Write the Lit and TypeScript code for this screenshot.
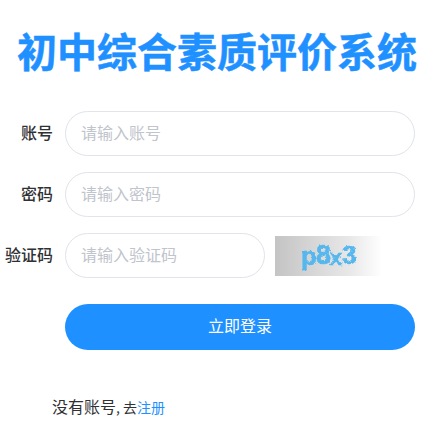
import { LitElement, html, css } from "lit";
import { customElement } from "lit/decorators.js";

@customElement("app-root")
export class AppRoot extends LitElement {
  static styles = css`
    :host { display: block; width: 445px; height: 431px; overflow: hidden; background: #fff; font-family: "Noto Sans CJK SC", "Liberation Sans", sans-serif; font-size: 16px; color: #303133; }
    h1 { margin: 0; padding: 20px 11px 0 0; text-align: center; color: #1e90ff; font-size: 40px; line-height: 60px; font-weight: 700; -webkit-text-stroke: 0.5px #1e90ff; }
    form { display: flex; flex-direction: column; gap: 16px; margin-top: 31px; padding-right: 30px; }
    .row { display: flex; align-items: center; }
    .submit { margin-top: 10px; }
    label { width: 53px; text-align: right; flex: none; margin-right: 12px; padding-bottom: 4px; white-space: nowrap; color: #303133; font-weight: 500; }
    .field { flex: 1; height: 45px; box-sizing: border-box; border: 1px solid #e0e3ea; border-radius: 23px; padding: 0 15px 4px; color: #c0c4cc; display: flex; align-items: center; }
    .short { flex: none; width: 200px; }
    .captcha { margin-left: 10px; flex: none; display: block; }
    .btn { margin-left: 65px; flex: 1; height: 46px; border: 0; padding: 0 0 4px; border-radius: 23px; background: #1e90ff; color: #fff; font: inherit; }
    .foot { margin: 45px 0 0 52px; font-size: 14px; line-height: 22px; color: #303133; white-space: nowrap; }
    .lead { font-size: 16px; }
    .foot a { color: #1e90ff; }
  `;
  render() {
    return html`
      <h1>初中综合素质评价系统</h1>
      <form>
        <div class="row"><label>账号</label><div class="field">请输入账号</div></div>
        <div class="row"><label>密码</label><div class="field">请输入密码</div></div>
        <div class="row"><label>验证码</label><div class="field short">请输入验证码</div>
          <svg class="captcha" width="107" height="40" viewBox="0 0 107 40">
            <defs>
              <linearGradient id="g"><stop offset="0" stop-color="#c4c4c4"/><stop offset="0.7" stop-color="#e8e8e8"/><stop offset="1" stop-color="#ffffff"/></linearGradient>
              <filter id="rough" x="-10%" y="-10%" width="120%" height="120%">
                <feTurbulence type="fractalNoise" baseFrequency="0.3" numOctaves="2" seed="4"/>
                <feDisplacementMap in="SourceGraphic" scale="3" xChannelSelector="R" yChannelSelector="G"/>
                <feGaussianBlur stdDeviation="0.6"/>
              </filter>
            </defs>
            <rect width="107" height="40" fill="url(#g)"/>
            <text y="29" font-family="Liberation Sans" font-weight="700" fill="#55b7ee" stroke="#55b7ee" stroke-width="0.5" filter="url(#rough)">
              <tspan x="26" font-size="26">p</tspan><tspan x="41" y="28" font-size="27">8</tspan><tspan x="55" y="29" font-size="22">x</tspan><tspan x="67" y="28" font-size="26">3</tspan>
            </text>
          </svg>
        </div>
        <div class="row submit"><button type="button" class="btn">立即登录</button></div>
      </form>
      <div class="foot"><span class="lead">没有账号</span>, 去<a>注册</a></div>
    `;
  }
}
